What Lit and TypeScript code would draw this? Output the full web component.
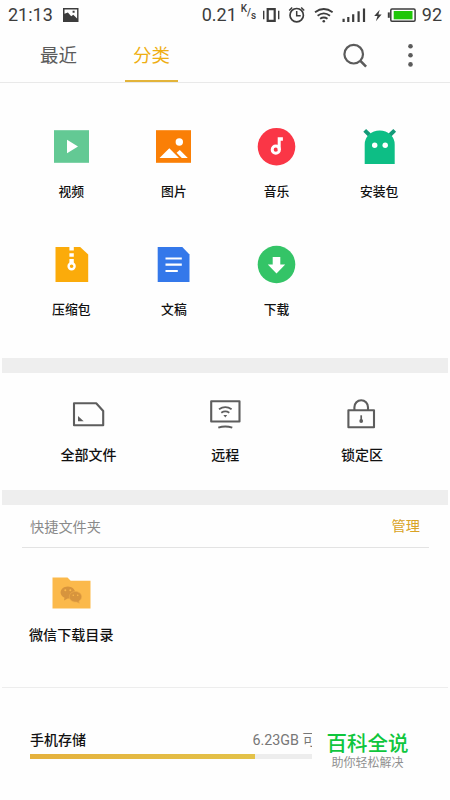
import { LitElement, html, css, svg } from "lit";
import { customElement } from "lit/decorators.js";

const categories = [
  {
    label: "视频",
    icon: svg`<rect x="2" y="3.2" width="35" height="32.6" fill="#63c994"/><path d="M15 12.7v13.6L26 19.5z" fill="#fff"/>`,
  },
  {
    label: "图片",
    icon: svg`<rect x="2" y="3.2" width="35" height="32.6" fill="#fa7f06"/><circle cx="25.3" cy="15" r="3.7" fill="#fff"/><path d="M5.5 31 15.3 21.3 25 31zM22.6 25.8l3.2-2.7L33.8 31h-6z" fill="#fff"/>`,
  },
  {
    label: "音乐",
    icon: svg`<circle cx="19.5" cy="19.7" r="18.8" fill="#fa3646"/><circle cx="18.8" cy="22.7" r="3.6" fill="none" stroke="#fff" stroke-width="3"/><path d="M20.7 23V10.2h5.2v3.6h-2.2V23z" fill="#fff"/>`,
  },
  {
    label: "安装包",
    icon: svg`<path d="M4.7 3.4 9.5 8M34.7 3.4 29.9 8" stroke="#139a78" stroke-width="4"/><path d="M4.7 37V17.5a15 14 0 0 1 30 0V37z" fill="#0dbe85"/><circle cx="14.7" cy="18.3" r="2.7" fill="#fff"/><circle cx="25.2" cy="18.3" r="2.7" fill="#fff"/>`,
  },
  {
    label: "压缩包",
    icon: svg`<path d="M3.5 2h24.7l8 7.5V37H3.5z" fill="#fbab0a"/><path d="M17.4 2h4.4v3.4h-4.4zM17.4 8.2h4.4v3.6h-4.4zM17.4 14h4.4v4h-4.4z" fill="#fff"/><circle cx="19.6" cy="21.2" r="3" fill="none" stroke="#fff" stroke-width="2.4"/>`,
  },
  {
    label: "文稿",
    icon: svg`<path d="M3.7 2h24.6l7.2 7.5V37H3.7z" fill="#3478ea"/><path d="M11.5 13.5h16.3M11.5 19.7h16.3M11.5 26h12.3" stroke="#fff" stroke-width="2.2"/>`,
  },
  {
    label: "下载",
    icon: svg`<circle cx="19.5" cy="19.5" r="18.8" fill="#34c467"/><path d="M15.7 12h7.6v7.5h4.9l-8.7 9-8.7-9h4.9z" fill="#fff"/>`,
  },
];

const places = [
  {
    label: "全部文件",
    icon: svg`<path d="M4 4.2h22.2l7 7.8v14.2H4z"/><path d="M8 17v5.2h5.7z" fill="#5d5d5d" stroke="none"/>`,
  },
  {
    label: "远程",
    icon: svg`<path d="M4.2 2.2h28.3v20.3H4.2z"/><path d="M12 10.2q6.3-4.2 12.6 0M14.3 13.7q4-2.6 8 0" stroke-width="1.9"/><path d="M16.4 16.1h3.8l-1.9 2.4z" fill="#5d5d5d" stroke="none"/><path d="M11.3 28.6q7-2.4 14 0" stroke-width="2"/>`,
  },
  {
    label: "锁定区",
    icon: svg`<path d="M5.4 11.3H31v17H5.4zM11.4 11V8.2a6.8 7 0 0 1 13.6 0V11"/><path d="M18.2 16.3v4.8" stroke-width="1.7"/><circle cx="18.2" cy="22" r="1.9" fill="#5d5d5d" stroke="none"/>`,
  },
];

@customElement("app-root")
export class AppRoot extends LitElement {
  static styles = css`
    :host {
      display: block;
      width: 450px;
      height: 800px;
      overflow: hidden;
      background: #fefefe;
      color: #111;
      font-family: Roboto, "Noto Sans CJK SC", sans-serif;
    }
    * { box-sizing: border-box; }
    svg { display: block; flex: none; overflow: visible; }
    .status {
      height: 30px;
      padding: 0 8px 1px 8px;
      display: flex;
      align-items: center;
      color: #3c3c3c;
      font-size: 18px;
      line-height: 30px;
    }
    .time { width: 54px; }
    .space { flex: 1; }
    .unit { font-size: 10px; width: 17px; margin-left: 4px; display: flex; line-height: 12px; font-weight: 500; }
    .unit-k { margin-top: -4px; }
    .unit-s { margin-top: 3px; }
    .header {
      height: 53px;
      border-bottom: 1px solid #e9e9e9;
      display: flex;
      align-items: stretch;
      padding-left: 32px;
      padding-right: 34px;
    }
    .tab {
      width: 53px;
      line-height: 52px;
      text-align: center;
      font-size: 18.5px;
      color: #5b5b5b;
      white-space: nowrap;
    }
    .tab-active {
      margin-left: 40px;
      color: #eeae12;
      border-bottom: 2px solid #e3b43a;
    }
    .tools { margin-left: auto; display: flex; align-items: center; gap: 37px; }
    .categories {
      height: 275px;
      padding: 44px 20px 0;
      display: grid;
      grid-template-columns: repeat(4, 102.6px);
      grid-auto-rows: 117.5px;
    }
    .entry { display: flex; flex-direction: column; align-items: center; white-space: nowrap; font-weight: 500; }
    .category-label { margin-top: 16px; font-size: 12.8px; line-height: 20px; }
    .band { height: 15px; margin: 0 2px; background: #eee; }
    .places {
      height: 117px;
      padding: 26px 20px 0;
      display: grid;
      grid-template-columns: repeat(3, 136.8px);
    }
    .place-label { margin-top: 14px; font-size: 14px; line-height: 20px; }
    .section-head {
      height: 43px;
      margin: 0 21px 0 22px;
      padding: 0 9px 3px 8px;
      border-bottom: 1px solid #e3e3e3;
      display: flex;
      align-items: center;
      justify-content: space-between;
      font-size: 14.2px;
      color: #8a8a8a;
    }
    .section-title { padding-top: 2px; }
    .manage { color: #d9a325; }
    .shortcuts { height: 139px; padding: 29px 0 0 29px; display: flex; align-items: flex-start; }
    .folder-label { font-size: 14.1px; line-height: 20px; margin-top: 16px; }
    .storage {
      height: 112px;
      margin: 0 2px;
      border-top: 1px solid #ededed;
      padding: 42px 0 0 28px;
      display: flex;
      align-items: flex-start;
    }
    .meter-box { width: 282px; }
    .meter-head { display: flex; justify-content: space-between; height: 24px; line-height: 20px; font-size: 14px; overflow: hidden; }
    .meter-name { font-weight: 500; }
    .free { width: 59.5px; overflow: hidden; white-space: nowrap; color: #777; font-size: 14.3px; }
    .meter { height: 5px; background: #ededed; }
    .fill { width: 225px; height: 5px; background: linear-gradient(90deg, #e5b13d, #e3c249); }
    .brand { width: 111px; padding-top: 1px; text-align: center; white-space: nowrap; }
    .brand-name { font-size: 20.5px; line-height: 26px; font-weight: 500; color: #0fc63d; }
    .brand-sub { font-size: 12px; line-height: 13px; color: #909090; }
  `;

  render() {
    return html`
      <div class="status">
        <span class="time">21:13</span>
        <svg width="18" height="14" viewBox="0 0 18 14">
          <path fill="#3c3c3c" fill-rule="evenodd" d="M1 0h15.5v14H1zM2.5 1.4v4.3l3.4-1.1 3.3 3.6 2.1-1.4 3.8 3.7V1.4zM10.6 2.7h2v2h-2z"/>
        </svg>
        <span class="space"></span>
        <span>0.21</span>
        <span class="unit"><span class="unit-k">K</span><span>/</span><span class="unit-s">s</span></span>
        <svg width="164" height="20" viewBox="0 0 164 20" fill="none" stroke="#3c3c3c">
          <path d="M9.7 4.2h7v11.6h-7z" stroke-width="2.2"/>
          <path d="M5.7 5.8v8.4M20.7 5.8v8.4" stroke-width="1.4"/>
          <circle cx="38.7" cy="10.2" r="6.7" stroke-width="1.7"/>
          <path d="M38.7 6v4.7h4M31.2 5.5l3-3M46.2 5.5l-3-3" stroke-width="1.5"/>
          <path d="M57 7.2q8.8-6.4 17.6 0M59.6 10.7q6.2-4.6 12.4 0M62.1 13.8q3.7-2.6 7.4 0" stroke-width="1.8"/>
          <circle cx="65.8" cy="16.2" r="1.3" fill="#3c3c3c" stroke="none"/>
          <path d="M85.6 13.8V17M90.3 12V17M95.2 9.3V17M100.6 6.3V17M106 3.5V17" stroke-width="2.2"/>
          <path d="M121.7 4.7 116.2 11h3.3l-1.6 5.2 5.7-6.8h-3.2z" fill="#3c3c3c" stroke="none"/>
          <rect x="132.8" y="4" width="24.3" height="12.3" rx="1.2" stroke-width="1.5"/>
          <path d="M130.8 7.4v5.4" stroke-width="2"/>
          <path d="M135.7 6h18.8v8.3h-18.8z" fill="#1fc608" stroke="none"/>
        </svg>
        <span>92</span>
      </div>
      <div class="header">
        <div class="tab">最近</div>
        <div class="tab tab-active">分类</div>
        <div class="tools">
          <svg width="24" height="24" viewBox="0 0 24 24" fill="none" stroke="#5b5b5b" stroke-width="2.2"><circle cx="10.7" cy="10.2" r="9.3"/><path d="m17.4 16.9 5.7 5.7" stroke-width="2.6"/></svg>
          <svg width="12" height="24" viewBox="0 0 12 24" fill="#5b5b5b"><circle cx="6.5" cy="2.2" r="2.3"/><circle cx="6.5" cy="11.3" r="2.3"/><circle cx="6.5" cy="20.4" r="2.3"/></svg>
        </div>
      </div>
      <div class="categories">
        ${categories.map((c) => html`<div class="entry">
          <svg width="39" height="39" viewBox="0 0 39 39">${c.icon}</svg>
          <span class="category-label">${c.label}</span>
        </div>`)}
      </div>
      <div class="band"></div>
      <div class="places">
        ${places.map((p) => html`<div class="entry">
          <svg width="37" height="32" viewBox="0 0 37 32" fill="none" stroke="#5d5d5d" stroke-width="2.1" stroke-linejoin="round">${p.icon}</svg>
          <span class="place-label">${p.label}</span>
        </div>`)}
      </div>
      <div class="band"></div>
      <div class="section-head"><span class="section-title">快捷文件夹</span><span class="manage">管理</span></div>
      <div class="shortcuts">
        <div class="entry">
          <svg width="38" height="32" viewBox="0 0 38 32">
            <path d="M.5.5h15l3.2 3.2h19.8v27.9H.5z" fill="#fbb94b"/>
            <path d="M15.8 9.4c4.2 0 7.3 2.8 7.3 6.2s-3.1 6-7.3 6l-3.8 2 .5-2.8c-2.4-1-3.9-3-3.9-5.2 0-3.4 3-6.2 7.2-6.2z" fill="#d7943d"/>
            <path d="M23.4 14.5c3.6 0 6.2 2.4 6.2 5.3 0 1.9-1.1 3.4-2.7 4.4l.4 2-2.6-1.2c-4.3.3-7.4-2-7.4-5.2 0-2.9 2.6-5.3 6.1-5.3z" fill="#d7943d" stroke="#edaa47" stroke-width=".7"/>
            <g fill="#fbb94b"><circle cx="13.3" cy="13.2" r="1"/><circle cx="18.3" cy="13.2" r="1"/><circle cx="21.3" cy="18.2" r=".8"/><circle cx="25.7" cy="18.2" r=".8"/></g>
          </svg>
          <span class="folder-label">微信下载目录</span>
        </div>
      </div>
      <div class="storage">
        <div class="meter-box">
          <div class="meter-head"><span class="meter-name">手机存储</span><span class="free">6.23GB 可</span></div>
          <div class="meter"><div class="fill"></div></div>
        </div>
        <div class="brand">
          <div class="brand-name">百科全说</div>
          <div class="brand-sub">助你轻松解决</div>
        </div>
      </div>
    `;
  }
}
